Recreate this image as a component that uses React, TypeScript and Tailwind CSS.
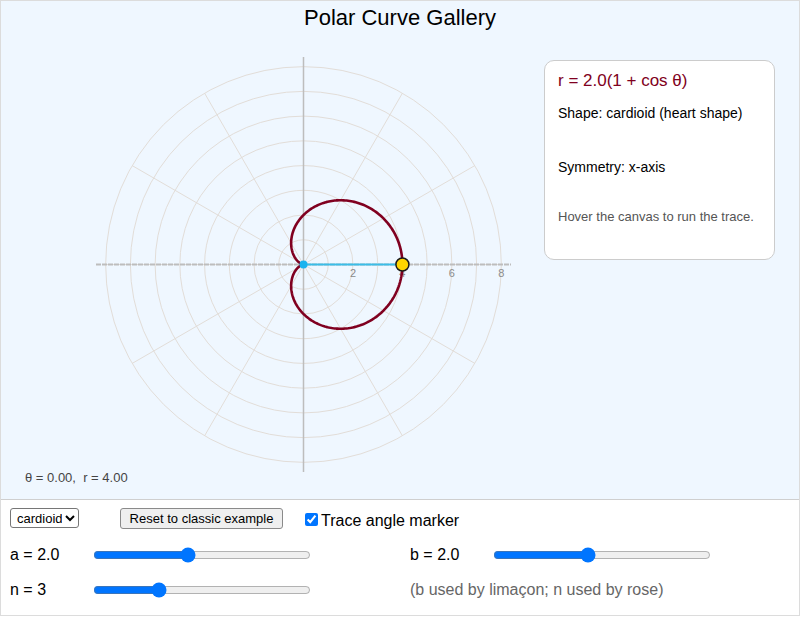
import React from "react"

const CX = 303.5
const CY = 264.5
const S = 24.73

const cardioidPath = () => {
  const pts: string[] = []
  for (let i = 0; i <= 360; i++) {
    const t = (i * Math.PI) / 180
    const r = 2 * (1 + Math.cos(t))
    const x = CX + r * Math.cos(t) * S
    const y = CY - r * Math.sin(t) * S
    pts.push(`${i === 0 ? "M" : "L"}${x.toFixed(2)},${y.toFixed(2)}`)
  }
  return pts.join(" ")
}

const PolarPlot = () => {
  const spokes = [0, 30, 60, 90, 120, 150, 180, 210, 240, 270, 300, 330]
  return (
    <svg width={530} height={441} viewBox="1 31 530 441" className="block shrink-0">
      {/* grid rings */}
      {[1, 2, 3, 4, 5, 6, 7, 8].map((k) => (
        <circle key={k} cx={CX} cy={CY} r={k * S} fill="none" stroke="#e2ddd8" strokeWidth={1} />
      ))}
      {/* spokes */}
      {spokes.map((a) => {
        const t = (a * Math.PI) / 180
        return (
          <line
            key={a}
            x1={CX}
            y1={CY}
            x2={CX + 8 * S * Math.cos(t)}
            y2={CY - 8 * S * Math.sin(t)}
            stroke="#e2ddd8"
            strokeWidth={1}
          />
        )
      })}
      {/* axes */}
      <line x1={CX - 207.5} y1={CY} x2={CX + 207.5} y2={CY} stroke="#bdbdbd" strokeWidth={2} strokeDasharray="5 1" />
      <line x1={CX} y1={CY - 207.5} x2={CX} y2={CY + 207.5} stroke="#bdbdbd" strokeWidth={1.5} />
      {/* ring labels */}
      {[2, 4, 6, 8].map((k) => (
        <text
          key={k}
          x={CX + k * S}
          y={CY + 12}
          textAnchor="middle"
          fontSize={11}
          fill="#8a8a8a"
          fontFamily="'Liberation Sans', Arial, sans-serif"
        >
          {k}
        </text>
      ))}
      {/* curve */}
      <path d={cardioidPath()} fill="none" stroke="#800020" strokeWidth={2.6} strokeLinejoin="round" />
      {/* trace */}
      <line x1={CX} y1={CY} x2={CX + 4 * S} y2={CY} stroke="#3bbde8" strokeWidth={2} />
      <circle cx={CX} cy={CY} r={4} fill="#19b3ef" />
      <circle cx={CX + 4 * S} cy={CY} r={6.5} fill="#ffd500" stroke="#1a1a1a" strokeWidth={1.5} />
    </svg>
  )
}

const App = () => {
  return (
    <div className="w-[800px] h-[616px] border border-[#dcdcdc] bg-white font-['Liberation_Sans',Arial,sans-serif] text-black">
      {/* Canvas area */}
      <div className="h-[498px] bg-[#eff7ff] flex flex-col">
        <h1 className="pt-[4px] text-center text-[22px] leading-[26px]">Polar Curve Gallery</h1>
        <div className="flex items-start">
          <PolarPlot />
          <div className="ml-[13px] mt-[29px] w-[231px] h-[200px] bg-white border border-[#cccccc] rounded-[10px] pl-[13px] pt-[10px]">
            <div className="text-[17px] leading-[20px] text-[#800020]">r = 2.0(1 + cos θ)</div>
            <div className="mt-[14px] text-[14px] leading-[16px]">Shape: cardioid (heart shape)</div>
            <div className="mt-[38px] text-[14px] leading-[16px]">Symmetry: x-axis</div>
            <div className="mt-[34px] text-[13px] leading-[16px] text-[#555]">Hover the canvas to run the trace.</div>
          </div>
        </div>
        <div className="pl-[24px] text-[13px] leading-[12px] text-[#444] whitespace-pre">θ = 0.00,  r = 4.00</div>
      </div>

      {/* Controls */}
      <div className="border-t border-[#cfcfcf] pl-[9px] pt-[7px]">
        <div className="flex items-center h-[22px]">
          <select
            defaultValue="cardioid"
            className="w-[69px] h-[20px] text-[13px] border border-[#767676] rounded-[3px] bg-white pl-[2px]"
          >
            <option value="cardioid">cardioid</option>
            <option value="limacon">limaçon</option>
            <option value="rose">rose</option>
            <option value="spiral">spiral</option>
          </select>
          <button className="ml-[41px] w-[163px] h-[21px] text-[13px] border border-[#8a8a8a] rounded-[3px] bg-[#efefef] px-[6px]">
            Reset to classic example
          </button>
          <input type="checkbox" defaultChecked className="ml-[22px] mt-[2px] w-[13px] h-[13px]" />
          <label className="ml-[3px] pt-[6px] text-[16px]">Trace angle marker</label>
        </div>

        <div className="mt-[14px] grid grid-cols-[83px_317px_83px_218px] auto-rows-[24px] gap-y-[11px] items-center text-[16px]">
          <span>a = 2.0</span>
          <input type="range" min={0.5} max={4} step={0.1} defaultValue={2} className="w-[218px]" />
          <span>b = 2.0</span>
          <input type="range" min={0.5} max={4} step={0.1} defaultValue={2} className="w-[218px]" />

          <span>n = 3</span>
          <input type="range" min={1} max={8} step={1} defaultValue={3} className="w-[218px]" />
          <span className="col-span-2 text-[#666]">(b used by limaçon; n used by rose)</span>
        </div>
      </div>
    </div>
  )
}

export default App
